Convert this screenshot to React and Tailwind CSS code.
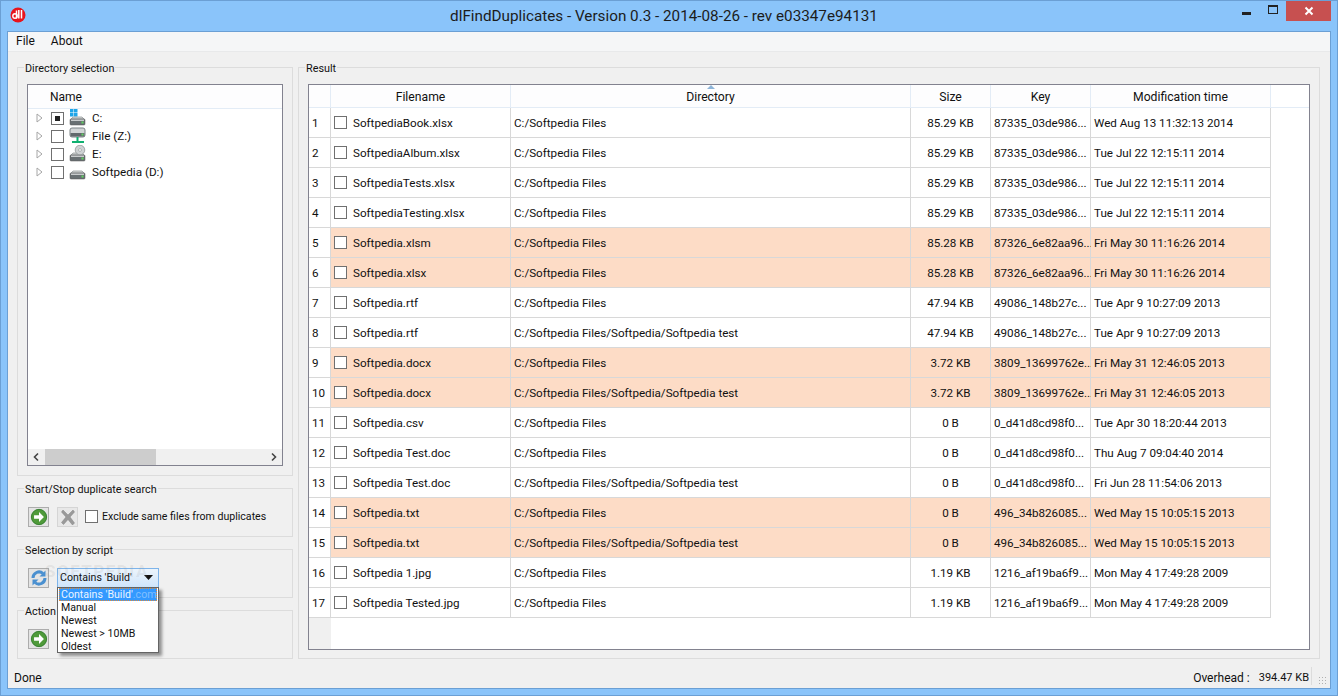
import React from "react";

const rows = [
  ["SoftpediaBook.xlsx","C:/Softpedia Files","85.29 KB","87335_03de986...","Wed Aug 13 11:32:13 2014",0],
  ["SoftpediaAlbum.xlsx","C:/Softpedia Files","85.29 KB","87335_03de986...","Tue Jul 22 12:15:11 2014",0],
  ["SoftpediaTests.xlsx","C:/Softpedia Files","85.29 KB","87335_03de986...","Tue Jul 22 12:15:11 2014",0],
  ["SoftpediaTesting.xlsx","C:/Softpedia Files","85.29 KB","87335_03de986...","Tue Jul 22 12:15:11 2014",0],
  ["Softpedia.xlsm","C:/Softpedia Files","85.28 KB","87326_6e82aa96...","Fri May 30 11:16:26 2014",1],
  ["Softpedia.xlsx","C:/Softpedia Files","85.28 KB","87326_6e82aa96...","Fri May 30 11:16:26 2014",1],
  ["Softpedia.rtf","C:/Softpedia Files","47.94 KB","49086_148b27c...","Tue Apr 9 10:27:09 2013",0],
  ["Softpedia.rtf","C:/Softpedia Files/Softpedia/Softpedia test","47.94 KB","49086_148b27c...","Tue Apr 9 10:27:09 2013",0],
  ["Softpedia.docx","C:/Softpedia Files","3.72 KB","3809_13699762e...","Fri May 31 12:46:05 2013",1],
  ["Softpedia.docx","C:/Softpedia Files/Softpedia/Softpedia test","3.72 KB","3809_13699762e...","Fri May 31 12:46:05 2013",1],
  ["Softpedia.csv","C:/Softpedia Files","0 B","0_d41d8cd98f0...","Tue Apr 30 18:20:44 2013",0],
  ["Softpedia Test.doc","C:/Softpedia Files","0 B","0_d41d8cd98f0...","Thu Aug 7 09:04:40 2014",0],
  ["Softpedia Test.doc","C:/Softpedia Files/Softpedia/Softpedia test","0 B","0_d41d8cd98f0...","Fri Jun 28 11:54:06 2013",0],
  ["Softpedia.txt","C:/Softpedia Files","0 B","496_34b826085...","Wed May 15 10:05:15 2013",1],
  ["Softpedia.txt","C:/Softpedia Files/Softpedia/Softpedia test","0 B","496_34b826085...","Wed May 15 10:05:15 2013",1],
  ["Softpedia 1.jpg","C:/Softpedia Files","1.19 KB","1216_af19ba6f9...","Mon May 4 17:49:28 2009",0],
  ["Softpedia Tested.jpg","C:/Softpedia Files","1.19 KB","1216_af19ba6f9...","Mon May 4 17:49:28 2009",0],
];

function Group({ label, className, children }) {
  return (
    <div className={"relative border border-[#dcdcdc] " + className}>
      <span className="absolute -top-[6px] left-[6px] bg-[#f0f0f0] px-[1px] text-[10.8px] leading-[14px]">{label}</span>
      {children}
    </div>
  );
}

function Box({ className = "", children }) {
  return <span className={"flex h-[13px] w-[13px] shrink-0 items-center justify-center border border-[#707070] bg-white " + className}>{children}</span>;
}

function Arrow() {
  return (
    <svg width="18" height="18" viewBox="0 0 20 20">
      <circle cx="10" cy="10" r="8.500" fill="#4f9a3a" stroke="#2f7a2a" />
      <path d="M4.500 8h5.500V4.500L15.500 10 10 15.500V12H4.500z" fill="#fff" />
    </svg>
  );
}

function ToolBtn({ children, className = "border-[#acacac] bg-[#e4e4e4]" }) {
  return <span className={"flex h-[20px] w-[21px] items-center justify-center border " + className}>{children}</span>;
}

function Tri() {
  return (
    <svg width="7" height="10" viewBox="0 0 7 10" className="shrink-0">
      <path d="M1 1l5 4-5 4z" fill="#fff" stroke="#a6a6a6" />
    </svg>
  );
}

function Drive({ kind }) {
  return (
    <svg width="18" height="18" viewBox="0 0 18 18" className="shrink-0">
      {kind === "c" && (
        <g fill="#1fa5e8">
          <rect x="1" y="0" width="3.500" height="3.500" /><rect x="5" y="0" width="3.500" height="3.500" />
          <rect x="1" y="4" width="3.500" height="3.500" /><rect x="5" y="4" width="3.500" height="3.500" />
        </g>
      )}
      {kind === "z" ? (
        <g>
          <rect x="1" y="1" width="15" height="9" rx="2" fill="#d2d5d6" stroke="#7c8487" />
          <rect x="1.500" y="6" width="14" height="3.500" fill="#62696c" />
          <rect x="12.500" y="6.500" width="2" height="2" fill="#5fd35f" />
          <path d="M8.500 10v4M3 15h12" stroke="#10b070" strokeWidth="2" />
        </g>
      ) : (
        <g>
          <path d="M2 10l2-2h9l2 2z" fill="#d8dadb" stroke="#8a8f91" strokeWidth=".7" />
          <rect x="1" y="10" width="15" height="6" rx="1" fill="#697073" stroke="#555" strokeWidth=".5" />
          <rect x="2" y="10.500" width="13" height="1.500" fill="#c9cccd" />
          <rect x="12.500" y="12.500" width="2" height="2" fill="#5fd35f" />
        </g>
      )}
      {kind === "e" && (
        <g>
          <circle cx="11" cy="5" r="4.800" fill="#cfd2d4" stroke="#8a8f91" strokeWidth=".7" />
          <circle cx="11" cy="5" r="1.400" fill="#fff" stroke="#8a8f91" strokeWidth=".6" />
        </g>
      )}
    </svg>
  );
}

function TreeRow({ kind, label, checked }) {
  return (
    <div className="flex h-[18px] items-center pl-[8px]">
      <Tri />
      <Box className="ml-[8px]">{checked && <span className="h-[5px] w-[5px] bg-[#222]" />}</Box>
      <span className="ml-[5px]"><Drive kind={kind} /></span>
      <span className="ml-[5px] text-[11.7px]">{label}</span>
    </div>
  );
}

const grid = "grid grid-cols-[22px_180px_400px_80px_100px_180px]";
const hcell = "flex items-center justify-center border-r border-[#e3ecf6] bg-[#fdfdfe] pt-[1px]";
const cell = "flex items-center border-b border-r border-[#d8d8d8] ";

export default function App() {
  return (
    <div className="flex h-[696px] w-[1338px] flex-col overflow-hidden border border-[#6b9fd4] bg-[#8ac4fa] text-[12px] leading-[14px] text-[#111] [font-family:Roboto,sans-serif]">
      <div className="flex h-[30px] shrink-0 items-start">
        <svg width="16" height="16" viewBox="0 0 16 16" className="ml-[9px] mt-[6px] shrink-0">
          <circle cx="8" cy="8" r="7.500" fill="#e8141c" />
          <path d="M6.500 3.500v8M8.800 3v8.500M11.500 3v8.500" stroke="#fff" strokeWidth="1.500" fill="none" />
          <circle cx="5" cy="9" r="2.200" fill="none" stroke="#fff" strokeWidth="1.400" />
        </svg>
        <div className="flex-1 pl-[60px] pt-[6px] text-center text-[15.25px] leading-[18px] text-[#1c1c1c]">dlFindDuplicates - Version 0.3 - 2014-08-26 - rev e03347e94131</div>
        <div className="flex h-[20px] items-center">
          <span className="mr-[17px] mt-[5px] h-[3px] w-[9px] bg-[#222]" />
          <span className="mb-[1px] mr-[8px] -mt-[3px] h-[9px] w-[10px] border border-t-2 border-[#222]" />
        </div>
        <div className="mr-[6px] flex h-[20px] w-[45px] items-center justify-center bg-[#c75050]">
          <svg width="10" height="10" viewBox="0 0 10 10"><path d="M1.500 1.500l7 7M8.500 1.500l-7 7" stroke="#fff" strokeWidth="2" /></svg>
        </div>
      </div>

      <div className="mx-[6px] mb-[6px] flex min-h-0 flex-1 flex-col border border-[#6b9fd4] bg-[#f0f0f0]">
        <div className="flex h-[20px] shrink-0 items-center gap-[16px] border-b border-[#e8e9ea] bg-[#f5f6f7] pb-[2px] pl-[8px]">
          <span>File</span><span>About</span>
        </div>

        <div className="flex min-h-0 flex-1 gap-[5px] pl-[9px] pr-[10px] pt-[15px]">
          <div className="flex w-[276px] shrink-0 flex-col gap-[12px]">
            <Group label="Directory selection" className="h-[409px] px-[9px] pt-[16px]">
              <div className="flex h-[382px] flex-col border border-[#82828f] bg-white">
                <div className="flex h-[24px] shrink-0 items-center border-b border-[#e3ecf6] bg-[#fdfdfe] pl-[22px]">Name</div>
                <div className="flex-1">
                  <TreeRow kind="c" label="C:" checked />
                  <TreeRow kind="z" label="File (Z:)" />
                  <TreeRow kind="e" label="E:" />
                  <TreeRow kind="d" label="Softpedia (D:)" />
                </div>
                <div className="flex h-[16px] shrink-0 items-center bg-[#f0f0f0]">
                  <svg width="17" height="16" viewBox="0 0 17 16"><path d="M10 4.500L6.500 8l3.500 3.500" stroke="#444" strokeWidth="1.600" fill="none" /></svg>
                  <span className="h-[16px] w-[111px] bg-[#cdcdcd]" />
                  <span className="flex-1" />
                  <svg width="17" height="16" viewBox="0 0 17 16"><path d="M7 4.500L10.500 8 7 11.500" stroke="#444" strokeWidth="1.600" fill="none" /></svg>
                </div>
              </div>
            </Group>

            <Group label="Start/Stop duplicate search" className="flex h-[49px] items-center pl-[10px] pt-[8px]">
              <ToolBtn><Arrow /></ToolBtn>
              <ToolBtn className="ml-[8px] border-[#d5d5d5] bg-[#e8e8e8]">
                <svg width="16" height="18" viewBox="0 0 16 18"><path d="M3 2l5 5 5-5 1.500 2-4.500 5 4.500 6-2 2-4.500-5.500L3.500 16.500l-2-2L6 9 1.500 4z" fill="#9a9a9a" stroke="#838383" strokeWidth=".5" /></svg>
              </ToolBtn>
              <Box className="ml-[7px]" />
              <span className="ml-[4px] text-[10.6px]">Exclude same files from duplicates</span>
            </Group>

            <Group label="Selection by script" className="flex h-[49px] items-center pl-[10px] pt-[8px]">
              <ToolBtn>
                <svg width="18" height="18" viewBox="0 0 18 18" fill="none" stroke="#4a90d0" strokeWidth="3">
                  <path d="M3 9a6 6 0 0 1 10-4.500" /><path d="M15 9a6 6 0 0 1-10 4.500" />
                  <path d="M15.500 1.500v6h-6z" fill="#4a90d0" stroke="none" /><path d="M2.500 16.500v-6h6z" fill="#4a90d0" stroke="none" />
                </svg>
              </ToolBtn>
              <div className="ml-[8px] flex h-[20px] w-[102px] items-center whitespace-nowrap border border-[#7eb4ea] bg-gradient-to-b from-[#ecf4fc] to-[#cfe5fb] pl-[2px] text-[10.6px]">
                <span className="flex-1">Contains 'Build'</span>
                <svg width="9" height="5" viewBox="0 0 9 5" className="mr-[5px]"><path d="M0 0h9L4.500 5z" fill="#111" /></svg>
              </div>
              <span className="pointer-events-none absolute left-[27px] top-[11px] text-[17px] font-bold leading-[20px] tracking-[1.500px] text-[#8c8c8c]/15">SOFTPEDIA</span>
            </Group>

            <Group label="Action" className="flex h-[49px] items-center pl-[10px] pt-[8px]">
              <ToolBtn><Arrow /></ToolBtn>
              <div className="absolute -top-[24px] left-[39px] z-10 flex h-[66px] w-[102px] flex-col whitespace-nowrap border border-[#646464] bg-white px-[1px] text-[10.6px] shadow-[3px_3px_3px_rgba(0,0,0,0.4)]">
                <div className="flex h-[13px] border border-dotted border-[#e08a3a] bg-[#3399ff] pl-[1px] leading-[11px] text-[#eaf4ff]">
                  <span>Contains 'Build'</span><span className="text-[#80bfff]">.com</span>
                </div>
                <div className="h-[13px] pl-[2px] leading-[13px]">Manual</div>
                <div className="h-[13px] pl-[2px] leading-[13px]">Newest</div>
                <div className="h-[13px] pl-[2px] leading-[13px]">Newest &gt; 10MB</div>
                <div className="h-[13px] pl-[2px] leading-[13px]">Oldest</div>
              </div>
            </Group>
          </div>

          <Group label="Result" className="h-[592px] flex-1 px-[9px] pt-[16px]">
            <div className="flex h-[566px] flex-col border border-[#82828f] bg-white">
              <div className={grid + " h-[23px] shrink-0 border-b border-[#e3ecf6] text-[12.2px]"}>
                <div className={hcell} />
                <div className={hcell}>Filename</div>
                <div className={hcell + " relative"}>
                  <svg width="8" height="4" viewBox="0 0 8 4" className="absolute left-[196px] top-0"><path d="M0 4l4-4 4 4z" fill="#8db4d8" /></svg>
                  Directory
                </div>
                <div className={hcell}>Size</div>
                <div className={hcell}>Key</div>
                <div className={hcell}>Modification time</div>
              </div>
              <div className="flex min-h-0 flex-1 flex-col text-[11.65px]">
                {rows.map((r, i) => {
                  const bg = r[5] ? "bg-[#fddcc6] " : "";
                  return (
                    <div key={i} className={grid + " h-[30px] shrink-0"}>
                      <div className={cell + "pl-[3px]"}>{i + 1}</div>
                      <div className={cell + bg + "pl-[3px]"}>
                        <Box />
                        <span className="ml-[6px]">{r[0]}</span>
                      </div>
                      <div className={cell + bg + "pl-[3px]"}>{r[1]}</div>
                      <div className={cell + bg + "justify-center"}>{r[2]}</div>
                      <div className={cell + bg + "pl-[3px]"}>{r[3]}</div>
                      <div className={cell + bg + "pl-[3px]"}>{r[4]}</div>
                    </div>
                  );
                })}
                <div className="w-[22px] flex-1 bg-[#f0f0f0]" />
              </div>
            </div>
          </Group>
        </div>

        <div className="flex h-[29px] shrink-0 items-end justify-between pb-[3px] pl-[6px] pr-[4px]">
          <span>Done</span>
          <div className="flex items-end">
            <span className="ml-[1px]">Overhead :</span>
            <span className="ml-[9px] text-[11px]">394.47 KB</span>
            <span className="ml-[2px] h-[18px] w-px bg-[#dcdcdc]" />
            <span className="mb-[1px] ml-[6px] h-[8px] w-[8px] bg-[radial-gradient(#b0b0b0_1px,transparent_1px)] bg-[length:3px_3px]" />
          </div>
        </div>
      </div>
    </div>
  );
}
